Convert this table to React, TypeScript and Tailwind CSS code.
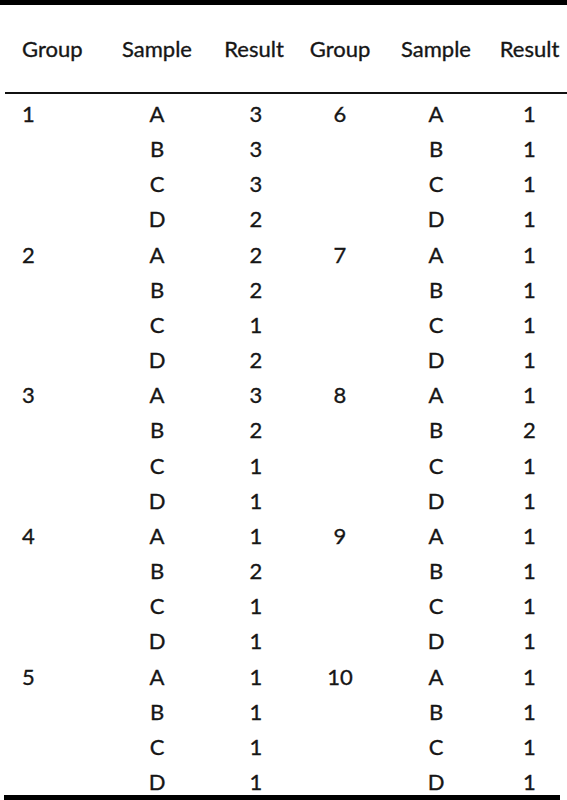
const groups = [
  { left: "1", leftResults: ["3", "3", "3", "2"], right: "6", rightResults: ["1", "1", "1", "1"] },
  { left: "2", leftResults: ["2", "2", "1", "2"], right: "7", rightResults: ["1", "1", "1", "1"] },
  { left: "3", leftResults: ["3", "2", "1", "1"], right: "8", rightResults: ["1", "2", "1", "1"] },
  { left: "4", leftResults: ["1", "2", "1", "1"], right: "9", rightResults: ["1", "1", "1", "1"] },
  { left: "5", leftResults: ["1", "1", "1", "1"], right: "10", rightResults: ["1", "1", "1", "1"] },
];

const samples = ["A", "B", "C", "D"];

const cols = "grid grid-cols-[101px_102px_92px_80px_112px_75px]";

export default function App() {
  return (
    <div
      className="w-[567px] h-[800px] bg-white text-[#161616] overflow-hidden [-webkit-text-stroke:0.35px_#161616]"
      style={{ fontFamily: "Lato, 'Open Sans', sans-serif" }}
    >
      <div className="h-[5px] bg-black" />
      <div className={`${cols} pl-[5px] h-[87px] items-center text-[22px]`}>
        <div className="pl-[17px]">Group</div>
        <div className="text-center">Sample</div>
        <div className="text-center">Result</div>
        <div className="text-center">Group</div>
        <div className="text-center">Sample</div>
        <div className="text-center">Result</div>
      </div>
      <div className="ml-[5px] h-[2px] bg-[#111]" />
      <div className="pl-[5px] h-[701px] pt-[2px] text-[22px] leading-[35.16px]">
        {groups.map((g) =>
          samples.map((s, i) => (
            <div key={g.left + s} className={cols}>
              <div className="pl-[17px]">{i === 0 ? g.left : ""}</div>
              <div className="text-center">{s}</div>
              <div className="text-center pl-[4px]">{g.leftResults[i]}</div>
              <div className="text-center">{i === 0 ? g.right : ""}</div>
              <div className="text-center">{s}</div>
              <div className="text-center">{g.rightResults[i]}</div>
            </div>
          ))
        )}
      </div>
      <div className="relative ml-[4px] w-[556px] h-[6px] bg-black" />
    </div>
  );
}
